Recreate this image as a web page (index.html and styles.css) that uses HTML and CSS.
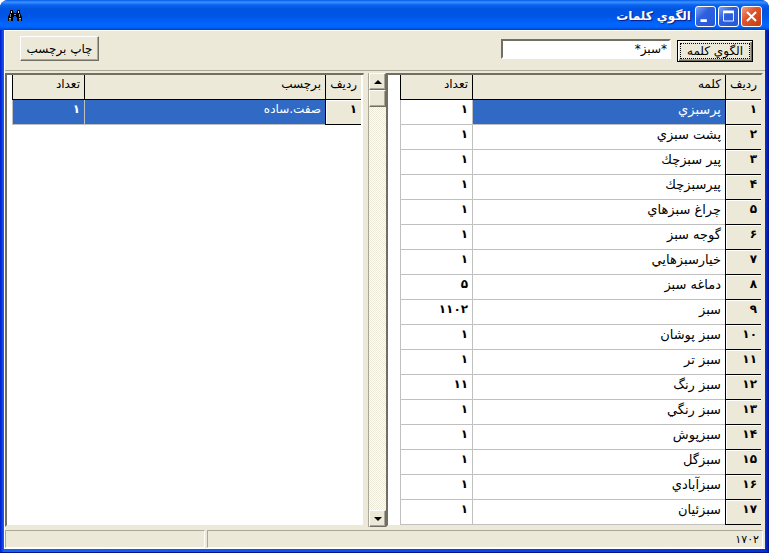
FILE: index.html
```
<!DOCTYPE html>
<html lang="fa" dir="rtl">
<head>
<meta charset="utf-8">
<title>الگوي كلمات</title>
<link rel="stylesheet" href="styles.css">
</head>
<body>
<div class="window">
  <header class="titlebar">
    <div class="controls">
      <button class="ctl close" aria-label="بستن"><svg viewBox="0 0 21 21"><path d="M5.500 5.500l10 10M15.500 5.500l-10 10" stroke="#fff" stroke-width="2.200"/></svg></button>
      <button class="ctl" aria-label="بزرگ"><svg viewBox="0 0 21 21"><path d="M5 5.500h11v10H5z" fill="none" stroke="#fff"/><path d="M4.500 5.500h12" stroke="#fff" stroke-width="3"/></svg></button>
      <button class="ctl" aria-label="كوچك"><svg viewBox="0 0 21 21"><path d="M5 15h7" stroke="#fff" stroke-width="3"/></svg></button>
    </div>
    <h1>الگوي كلمات</h1>
    <svg class="appicon" viewBox="0 0 16 16" aria-hidden="true"><path d="M3 2h3v2l1 1h2l1-1V2h3v3l2 4v4h-5V9H9V8H7v1H6v4H1V9l2-4z" fill="#000"/><path d="M4.500 3v2M11.500 3v2" stroke="#ddd"/><path d="M3.500 6v3M12.500 6v3M7 6.500h2" stroke="#888"/><path d="M2 10.500h2M12 10.500h2M2 12h2M12 12h2" stroke="#b7b79c"/></svg>
  </header>
  <main class="client">
    <div class="toolbar">
      <button class="btn primary"><span>الگوي كلمه</span></button>
      <input class="search" type="text" value="*سبز*" aria-label="الگوي كلمه">
      <button class="btn print">چاپ برچسب</button>
    </div>
    <div class="panes">
      <section class="pane words">
        <table>
          <colgroup><col class="c-no"><col><col class="c-count"></colgroup>
          <thead><tr><th>رديف</th><th>كلمه</th><th>تعداد</th></tr></thead>
          <tbody>
            <tr class="current"><th>۱</th><td>پرسبزي</td><td>۱</td></tr>
            <tr><th>۲</th><td>پشت سبزي</td><td>۱</td></tr>
            <tr><th>۳</th><td>پير سبزچك</td><td>۱</td></tr>
            <tr><th>۴</th><td>پيرسبزچك</td><td>۱</td></tr>
            <tr><th>۵</th><td>چراغ سبزهاي</td><td>۱</td></tr>
            <tr><th>۶</th><td>گوجه سبز</td><td>۱</td></tr>
            <tr><th>۷</th><td>خيارسبزهايي</td><td>۱</td></tr>
            <tr><th>۸</th><td>دماغه سبز</td><td>۵</td></tr>
            <tr><th>۹</th><td>سبز</td><td>۱۱۰۲</td></tr>
            <tr><th>۱۰</th><td>سبز پوشان</td><td>۱</td></tr>
            <tr><th>۱۱</th><td>سبز تر</td><td>۱</td></tr>
            <tr><th>۱۲</th><td>سبز رنگ</td><td>۱۱</td></tr>
            <tr><th>۱۳</th><td>سبز رنگي</td><td>۱</td></tr>
            <tr><th>۱۴</th><td>سبزپوش</td><td>۱</td></tr>
            <tr><th>۱۵</th><td>سبزگل</td><td>۱</td></tr>
            <tr><th>۱۶</th><td>سبزآبادي</td><td>۱</td></tr>
            <tr><th>۱۷</th><td>سبزئيان</td><td>۱</td></tr>
            <tr><th></th><td></td><td></td></tr>
          </tbody>
        </table>
      </section>
      <div class="scrollbar">
        <button class="arrow" aria-label="بالا"><svg viewBox="0 0 8 4"><path d="M0 4h8L4 0z"/></svg></button>
        <div class="thumb"></div>
        <div class="track"></div>
        <button class="arrow" aria-label="پايين"><svg viewBox="0 0 8 4"><path d="M0 0h8L4 4z"/></svg></button>
      </div>
      <section class="pane labels">
        <table>
          <colgroup><col class="c-no"><col><col class="c-count"></colgroup>
          <thead><tr><th>رديف</th><th>برچسب</th><th>تعداد</th></tr></thead>
          <tbody><tr class="current full"><th>۱</th><td>صفت.ساده</td><td>۱</td></tr></tbody>
        </table>
      </section>
    </div>
    <footer class="status"><span class="total">۱۷۰۲</span><span class="extra"></span></footer>
  </main>
</div>
</body>
</html>
```
FILE: styles.css
```
* { box-sizing: border-box; }
html, body { height: 100%; margin: 0; }
body {
  background: #fff;
  color: #000;
  font: 12px/16px "DejaVu Sans", sans-serif;
}
button { font: inherit; color: inherit; padding: 0; }
.window {
  height: 100%;
  display: flex;
  flex-direction: column;
  padding: 0 4px 3px 4px;
  background: linear-gradient(to right, #0019cf, #1662ee 4px, #0831d9 calc(100% - 4px), #00138c);
  border-bottom: 1px solid #00138c;
  border-radius: 8px 8px 0 0;
  overflow: hidden;
}
.titlebar {
  height: 30px;
  flex: none;
  display: flex;
  align-items: center;
  margin: 0 -4px;
  padding: 2px 7px 0;
  background: linear-gradient(#0058e6 0, #3c93ff 2px, #0a63ee 5px, #0054e3 9px, #0055e5 16px, #0066ff 24px, #0064fa 27px, #0040c8 30px);
}
.controls { display: flex; gap: 2px; }
.ctl {
  width: 21px;
  height: 21px;
  border: 1px solid #fff;
  border-radius: 3px;
  background: linear-gradient(135deg, #7da2f5, #2d60e0 40%, #2458d8);
}
.ctl svg { display: block; width: 19px; height: 19px; }
.close { background: linear-gradient(135deg, #f0a088, #e0542c 40%, #c83c14); }
h1 {
  margin: 0 4px 0 0;
  flex: 1;
  color: #fff;
  font-size: 12px;
  line-height: 20px;
  text-shadow: 1px 1px 1px #0a1883;
}
.appicon { width: 16px; height: 16px; }
.client {
  flex: 1;
  min-height: 0;
  display: flex;
  flex-direction: column;
  background: #ece9d8;
  border: solid #fff;
  border-width: 1px 0 1px 1px;
}
.toolbar {
  flex: none;
  height: 40px;
  display: flex;
  align-items: flex-start;
  padding: 5px 12px 0 15px;
  border-bottom: 1px solid #aca899;
}
.btn {
  height: 25px;
  background: #ece9d8;
  border: 1px solid;
  border-color: #fff #716f64 #716f64 #fff;
  box-shadow: inset -1px -1px #aca899;
}
.primary {
  width: 76px;
  height: 22px;
  margin-top: 4px;
  padding: 2px;
  border-color: #000;
  box-shadow: inset 1px 1px #fff, inset -1px -1px #716f64, inset -2px -2px #aca899;
}
.primary span { display: block; border: 1px dotted #000; line-height: 14px; }
.search {
  width: 170px;
  height: 20px;
  margin: 3px 6px 0 auto;
  padding: 0 2px;
  background: #fff;
  border: 2px solid;
  border-color: #716f64 #fff #fff #716f64;
  font: inherit;
}
.print { width: 79px; }
.panes { flex: 1; min-height: 0; display: flex; padding: 2px 2px 0 0; }
.pane {
  min-width: 0;
  overflow: hidden;
  background: #fff;
  border: 2px solid;
  border-color: #716f64 #ece9d8 #ece9d8 #716f64;
}
.words { flex: 375; }
.labels { flex: 358; margin-right: 4px; border-right-width: 1px; }
table { width: 100%; border-collapse: separate; border-spacing: 0; table-layout: fixed; }
.words table { width: calc(100% - 12px); }
.labels table { width: calc(100% - 7px); margin-right: 2px; }
.c-no { width: 36px; }
.c-count { width: 72px; }
th, td {
  height: 25px;
  padding: 1px 4px 6px;
  text-align: right;
  vertical-align: top;
  font-weight: normal;
  line-height: 17px;
  white-space: nowrap;
  overflow: hidden;
}
td { border-left: 1px solid #c0c0c0; border-bottom: 1px solid #c0c0c0; }
thead th, tbody th { background: #ece9d8; border-left: 1px solid #000; border-bottom: 1px solid #000; }
tbody th { box-shadow: inset 1px 1px #fff; }
.words td:nth-child(2) { font-size: 13px; }
td:last-child, tbody th { font-weight: bold; }
.current td:nth-child(2), .full td { background: #316ac5; color: #fff; }
.scrollbar {
  flex: none;
  width: 18px;
  display: flex;
  flex-direction: column;
  background: #f5f4ec;
  border-left: 1px solid #aca899;
}
.arrow, .thumb {
  flex: none;
  width: 17px;
  height: 17px;
  background: #ece9d8;
  border: 1px solid;
  border-color: #fff #716f64 #716f64 #fff;
  box-shadow: inset -1px -1px #aca899;
}
.arrow svg { display: block; width: 8px; height: 4px; margin: auto; }
.track { flex: 1; background: repeating-conic-gradient(#fff 0 25%, #ece9d8 0 50%) 0 0 / 2px 2px; }
.status {
  flex: none;
  height: 21px;
  display: flex;
  gap: 2px;
  padding: 3px 2px 0 0;
  font-size: 11px;
  line-height: 17px;
}
.status span { border: 1px solid; border-color: #aca899 #fff #fff #aca899; padding: 0 3px; }
.total { flex: 560; }
.extra { flex: 196; }
```
